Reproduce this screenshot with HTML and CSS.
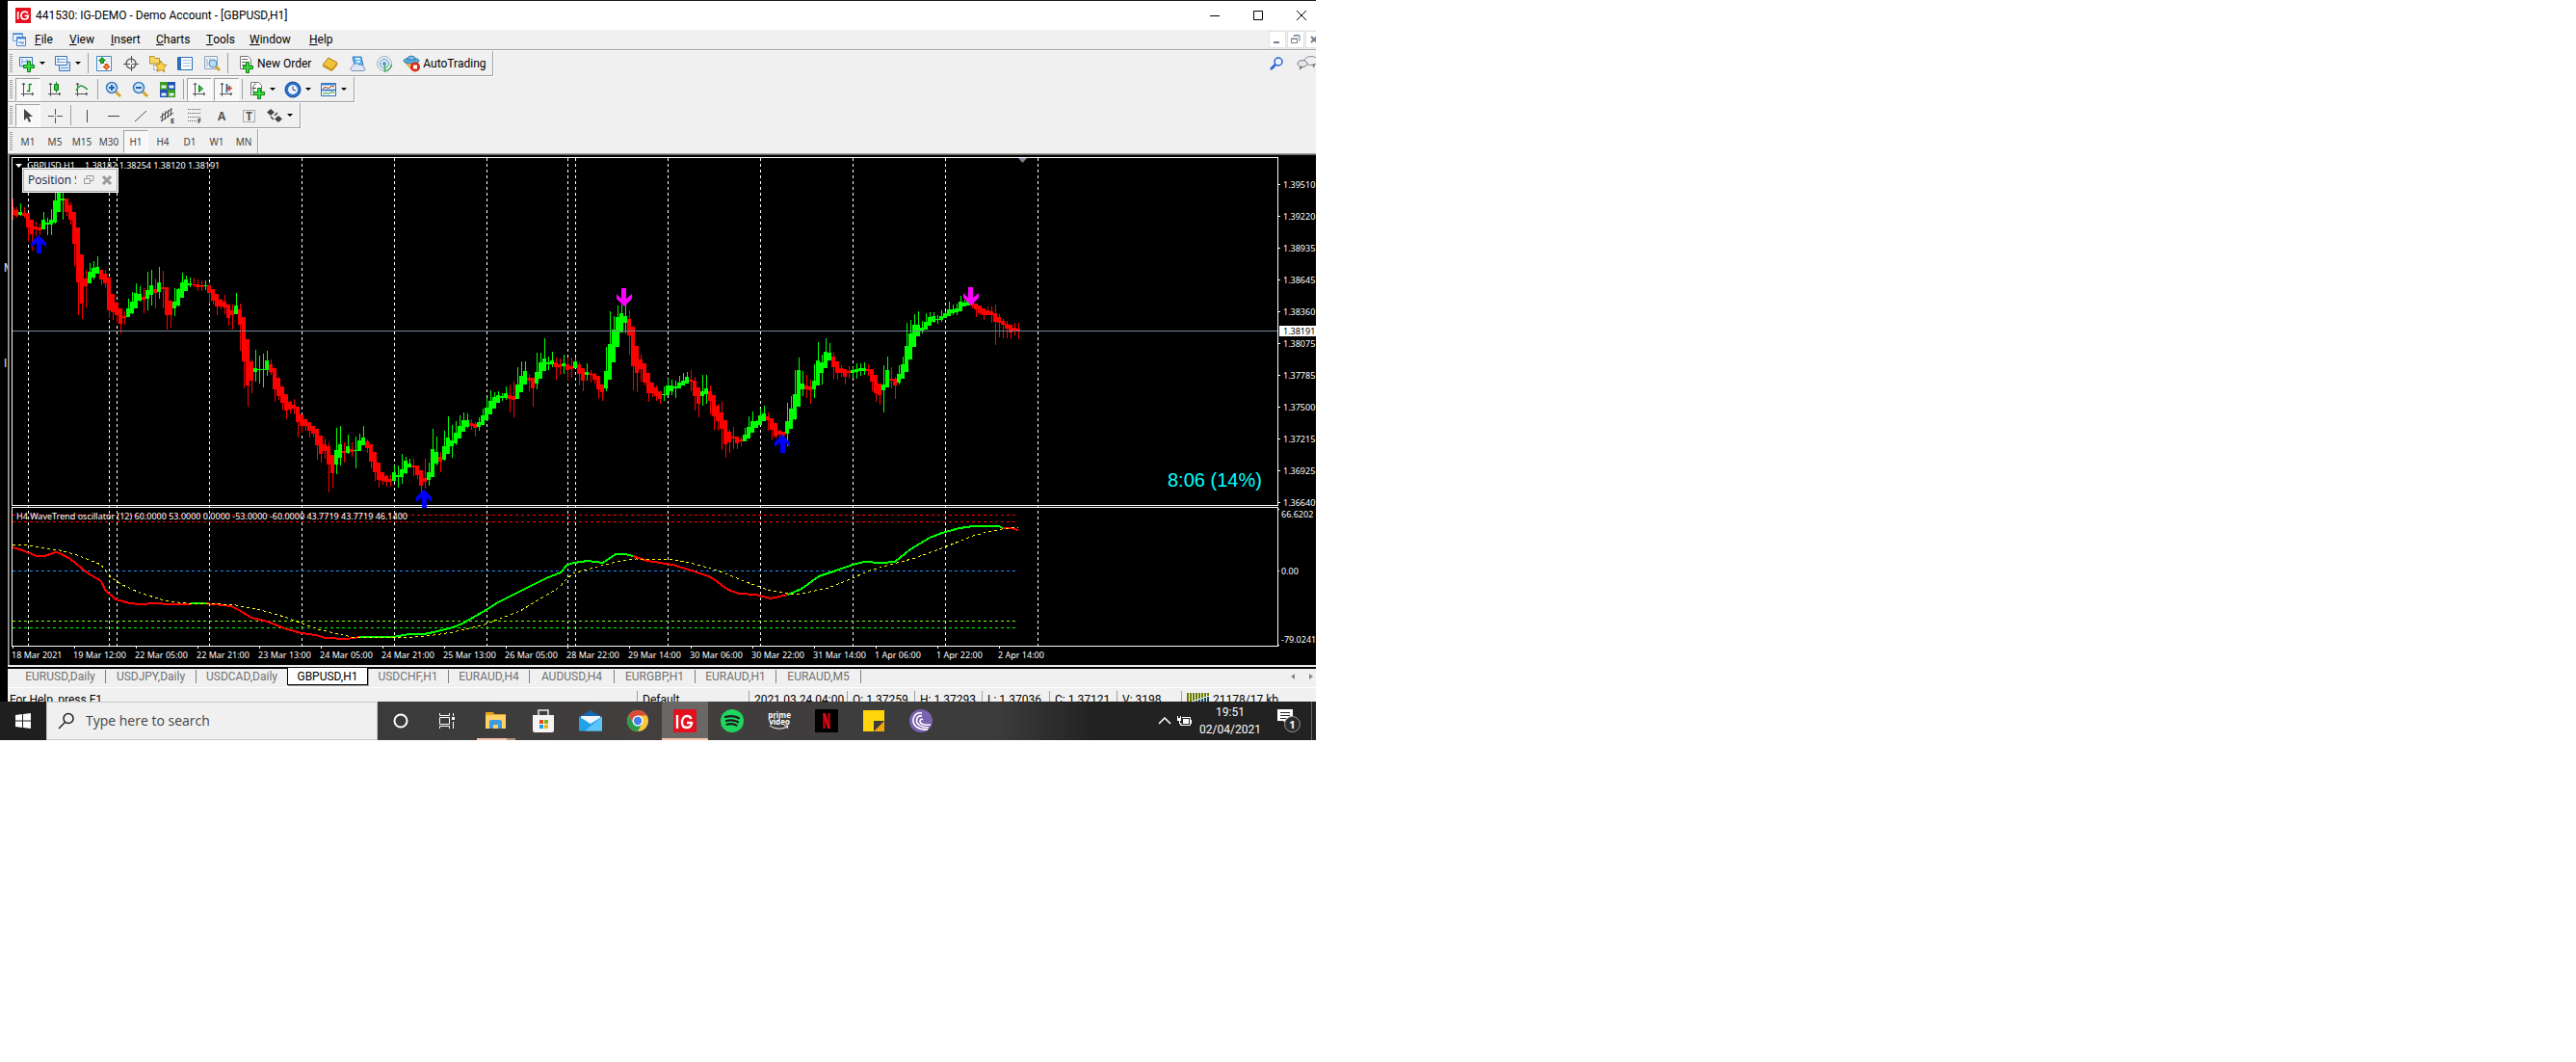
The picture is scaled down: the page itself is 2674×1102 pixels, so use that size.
FILE: index.html
```html
<!DOCTYPE html>
<html lang="en">
<head>
<meta charset="utf-8">
<title>441530: IG-DEMO - Demo Account - [GBPUSD,H1]</title>
<link rel="stylesheet" href="styles.css">
</head>
<body>
<div class="screen">
  <div class="workspace">
    <div class="backdrop"><span class="peek peek-first">M</span><span class="peek">I</span></div>
    <main class="terminal">
      <header class="titlebar">
        <svg class="ig-logo" width="16" height="16" viewBox="0 0 24 24"><rect width="24" height="24" fill="#e5101d"/><path d="M4 6v12M19.500 8.500C18 6.500 16 6 14 6.300C9.500 7 9 11 9 12.500C9 16 11.500 18 14.500 18C18 18 20 15.500 20 12.500H14.500" fill="none" stroke="#fff" stroke-width="2.600"/></svg>
        <h1>441530: IG-DEMO - Demo Account - [GBPUSD,H1]</h1>
        <div class="caption-buttons">
          <button aria-label="Minimize"><svg width="12" height="12"><path d="M1 6.500h10" stroke="#000"/></svg></button>
          <button aria-label="Maximize"><svg width="12" height="12"><path d="M1.500 1.500h9v9h-9z" fill="none" stroke="#000"/></svg></button>
          <button aria-label="Close"><svg width="12" height="12"><path d="M1 1l10 10M11 1L1 11" stroke="#000"/></svg></button>
        </div>
      </header>
      <nav class="menubar">
        <svg width="16" height="16" viewBox="0 0 16 16"><path d="M1.500 1.500h10v8h-10z" fill="#e4f0fc" stroke="#6ea0dc"/><path d="M1 2.500h11" stroke="#4a86d0"/><path d="M5.500 5.500h9v9h-9z" fill="#f4f9ff" stroke="#4a86d0"/><path d="M5 6.500h10" stroke="#4a86d0" stroke-width="2"/><path d="M7 10l1.500 2 1.500-2 1.500 3 1-3" fill="none" stroke="#4a86d0"/></svg>
        <button class="m-file"><u>F</u>ile</button>
        <button class="m-view"><u>V</u>iew</button>
        <button class="m-insert"><u>I</u>nsert</button>
        <button class="m-charts"><u>C</u>harts</button>
        <button class="m-tools"><u>T</u>ools</button>
        <button class="m-window"><u>W</u>indow</button>
        <button class="m-help"><u>H</u>elp</button>
        <div class="mdi-buttons">
          <button aria-label="Minimize chart"><svg width="16" height="16"><path d="M4 11h6" stroke="#71808f" stroke-width="2"/></svg></button>
          <button aria-label="Restore chart"><svg width="16" height="16"><path d="M6 5V4h6v5h-1M6 3.500h6" fill="none" stroke="#71808f"/><path d="M3.500 7.500h6v4h-6zM3 7h7" fill="none" stroke="#71808f"/></svg></button>
          <button aria-label="Close chart"><svg width="16" height="16"><path d="M5 5l6 6M11 5l-6 6" stroke="#71808f" stroke-width="2"/></svg></button>
        </div>
      </nav>

      <section class="toolbars">
        <div class="row">
          <div class="toolbar">
            <i class="grip"></i>
            <button class="tb drop" aria-label="New chart"><svg width="20" height="20"><path d="M2.500 3.500h13v9h-13z" fill="#eaf3fc" stroke="#3c74b8"/><path d="M5 5v6M5 8h8M10 5v5" stroke="#7aa6d8"/><path d="M10.500 7.500h3v4h4v3h-4v4h-3v-4h-4v-3h4z" fill="#35e038" stroke="#0a7d18"/></svg></button>
            <button class="tb drop" aria-label="Profiles"><svg width="20" height="20"><path d="M6.500 8.500h11v9h-11z" fill="#d8e9fa" stroke="#3c74b8"/><path d="M2.500 2.500h12v9h-12z" fill="#f2f8fe" stroke="#3c74b8"/><path d="M4 5.500h9M4 8.500h9M5.500 4v4M8 14.500h8" stroke="#6c9cd4"/></svg></button>
            <i class="sep"></i>
            <button class="tb" aria-label="Market Watch"><svg width="20" height="20"><path d="M2.500 2.500h15v15h-15z" fill="#fff" stroke="#3f86c8"/><path d="M12 5h4M12 8h4M4 11h4M4 14h4" stroke="#b6cfe6"/><path d="M8 3.500l3.500 3.500H9.500v2.500h-3V7H4.500z" fill="#24b030" stroke="#0a7d18"/><path d="M12.500 16.500l-3.500-3.500h2v-2.500h3V13h2z" fill="#ff7a3c" stroke="#c8400c"/></svg></button>
            <button class="tb" aria-label="Crosshair"><svg width="20" height="20"><circle cx="10" cy="10" r="5" fill="none" stroke="#666" stroke-width="1.500"/><path d="M10.500 2v7M10.500 11v7M2 10.500h7M11 10.500h7" stroke="#555"/></svg></button>
            <button class="tb" aria-label="Navigator"><svg width="20" height="20"><path d="M1.500 3V10h10V4.500H7L6 2.500H1.500z" fill="#f7d868" stroke="#b98d1c"/><path d="M5.500 11v6M6 16.500h4" stroke="#777" stroke-dasharray="1 1"/><path d="M13 7l1.800 3.800 4.200.6-3 3 .7 4.100-3.700-2-3.700 2 .7-4.100-3-3 4.200-.6z" fill="#fbd34b" stroke="#b98d1c"/></svg></button>
            <button class="tb" aria-label="Terminal"><svg width="20" height="20"><path d="M2.500 3.500h15v13h-15z" fill="#fafcff" stroke="#2d6fb8"/><path d="M4.500 3v14" stroke="#2d6fb8" stroke-width="3"/><path d="M8 6.500h8M8 9.500h8M8 12.500h8" stroke="#a9c4de"/></svg></button>
            <button class="tb" aria-label="Strategy Tester"><svg width="20" height="20"><path d="M2.500 2.500h13v13h-13z" fill="#eef3f8" stroke="#8ba3bb"/><path d="M5 5v8M8 4v8M12 5v8" stroke="#9aa8b6"/><circle cx="11" cy="10" r="4" fill="#b9dcf6" stroke="#4c86ba"/><path d="M14 13l4 4" stroke="#d8a02a" stroke-width="3"/></svg></button>
            <i class="sep"></i>
            <button class="tb labelled new-order"><svg width="20" height="20"><path d="M4.500 2.500h8l3 3v10h-11z" fill="#fff" stroke="#777"/><path d="M6 5.500h6M6 8.500h7M6 11.500h5" stroke="#666"/><path d="M10.500 8.500h3v4h4v3h-4v4h-3v-4h-3v-3h3z" fill="#35e038" stroke="#0a7d18"/></svg>New Order</button>
            <button class="tb" aria-label="MetaEditor"><svg width="20" height="20"><path d="M2 11l6-7 9 5-5 8z" fill="#f2c23c" stroke="#a97912"/><path d="M2 11l9 5 6-7v3l-6 6-9-5z" fill="#c98f14"/></svg></button>
            <button class="tb" aria-label="MetaTrader Market"><svg width="20" height="20"><path d="M5 3h9l2 9H7z" fill="#5bb2ee" stroke="#2c7fc0"/><path d="M8 5h5M9 8h4" stroke="#fff" stroke-width="1.500"/><path d="M4 17.500a3 3 0 0 1 1-5 4 4 0 0 1 7-1 3 3 0 0 1 4 2 2 2 0 0 1 0 4z" fill="#dde6f4" stroke="#7f97b8"/></svg></button>
            <button class="tb" aria-label="Signals"><svg width="20" height="20"><circle cx="10" cy="10" r="7.500" fill="#e6eef2" stroke="#9cb6c0"/><circle cx="10" cy="10" r="4.500" fill="none" stroke="#5c93b8"/><circle cx="10" cy="10" r="2" fill="#4f9ad0"/><path d="M10.500 11v7q6-1 7-7" fill="none" stroke="#48ac5c" stroke-width="1.500"/></svg></button>
            <button class="tb labelled"><svg width="20" height="20"><path d="M3 8l8 9 6-8z" fill="#f4c84a" stroke="#b98a1c"/><ellipse cx="10" cy="7" rx="8" ry="3" fill="#58aee0" stroke="#2e78ac"/><path d="M6 6a4 4 0 0 1 8 0z" fill="#7cc4ee" stroke="#2e78ac"/><circle cx="14" cy="13.500" r="5" fill="#dc2a14"/><path d="M12 11.500h4v4h-4z" fill="#fff"/></svg>AutoTrading</button>
          </div>
          <div class="toolbar-end">
            <button aria-label="Search"><svg width="16" height="16"><circle cx="10" cy="6" r="4" fill="#eaf2ff" stroke="#2a60d0" stroke-width="1.500"/><path d="M7 9l-5 5" stroke="#2a60d0" stroke-width="2.500"/></svg></button>
            <button aria-label="Chat"><svg width="22" height="18"><ellipse cx="15" cy="6" rx="7" ry="4.500" fill="#f0f0f2" stroke="#8a8a8e"/><path d="M16 10l2 4 1-5z" fill="#777"/><ellipse cx="6" cy="9" rx="5" ry="3.500" fill="#e4e4ea" stroke="#77777c"/><path d="M3 12v4l4-4z" fill="#777"/></svg></button>
          </div>
        </div>

        <div class="toolbar">
          <i class="grip"></i>
          <button class="tb pressed" aria-label="Bar chart"><svg width="20" height="20"><path d="M5.500 3v14M3 14.500h13M4 5l1.500-2L7 5M14 13l2 1.500-2 1.500" fill="none" stroke="#555"/><path d="M9 11.500h2.500v-7H14" fill="none" stroke="#14901c" stroke-width="1.500"/></svg></button>
          <button class="tb" aria-label="Candlesticks"><svg width="20" height="20"><path d="M5.500 3v14M3 14.500h13M4 5l1.500-2L7 5M14 13l2 1.500-2 1.500" fill="none" stroke="#555"/><path d="M11.500 2v11" stroke="#0a7d18"/><path d="M9.500 4.500h4v6h-4z" fill="#2fc838" stroke="#0a7d18"/></svg></button>
          <button class="tb" aria-label="Line chart"><svg width="20" height="20"><path d="M5.500 3v14M3 14.500h13M4 5l1.500-2L7 5M14 13l2 1.500-2 1.500" fill="none" stroke="#555"/><path d="M4 11c4-7 6-6 12-1" fill="none" stroke="#28a03c" stroke-width="1.500"/></svg></button>
          <i class="sep"></i>
          <button class="tb" aria-label="Zoom in"><svg width="20" height="20"><path d="M12 12l5 5" stroke="#d8a52a" stroke-width="3"/><circle cx="8" cy="8" r="5.500" fill="#cfe6fa" stroke="#3a7cc0" stroke-width="1.500"/><path d="M8 5v6M5 8h6" stroke="#2264b0" stroke-width="2"/></svg></button>
          <button class="tb" aria-label="Zoom out"><svg width="20" height="20"><path d="M12 12l5 5" stroke="#d8a52a" stroke-width="3"/><circle cx="8" cy="8" r="5.500" fill="#cfe6fa" stroke="#3a7cc0" stroke-width="1.500"/><path d="M5 8h6" stroke="#2264b0" stroke-width="2"/></svg></button>
          <button class="tb" aria-label="Tile windows"><svg width="20" height="20"><path d="M2 2h8v8H2zM10 10h8v8h-8z" fill="#3a9c20"/><path d="M10 2h8v8h-8zM2 10h8v8H2z" fill="#2450b8"/><path d="M3.500 5.500h5v3h-5zM11.500 5.500h5v3h-5zM3.500 13.500h5v3h-5zM11.500 13.500h5v3h-5z" fill="#e6f2e6"/></svg></button>
          <i class="sep"></i>
          <button class="tb pressed" aria-label="Auto scroll"><svg width="20" height="20"><path d="M5.500 3v14M3 14.500h13M4 5l1.500-2L7 5M14 13l2 1.500-2 1.500" fill="none" stroke="#555"/><path d="M9.500 5.500l4 3.500-4 3.500z" fill="#2fc838" stroke="#0a7d18"/></svg></button>
          <button class="tb pressed" aria-label="Chart shift"><svg width="20" height="20"><path d="M5.500 3v14M3 14.500h13M4 5l1.500-2L7 5M14 13l2 1.500-2 1.500" fill="none" stroke="#555"/><path d="M10.500 4v9" stroke="#2a70b0" stroke-width="2"/><path d="M16 8.500h-4M14 6l-2.500 2.500L14 11" fill="none" stroke="#c8401c" stroke-width="1.500"/></svg></button>
          <i class="sep"></i>
          <button class="tb drop" aria-label="Indicators"><svg width="20" height="20"><path d="M3.500 2.500h8l3 3v10h-11z" fill="#fff" stroke="#777"/><path d="M9 4.500c-2-1-3 1-3 3v6M4.500 8.500H9" fill="none" stroke="#555"/><path d="M10.500 8.500h3v4h4v3h-4v4h-3v-4h-4v-3h4z" fill="#35e038" stroke="#0a7d18"/></svg></button>
          <button class="tb drop" aria-label="Periods"><svg width="20" height="20"><circle cx="10" cy="10" r="8" fill="#2a72cc" stroke="#164a96"/><circle cx="10" cy="10" r="5" fill="#eaf4fe"/><path d="M10 6.500V10l3 1" fill="none" stroke="#444"/></svg></button>
          <button class="tb drop" aria-label="Templates"><svg width="20" height="20"><path d="M2.500 3.500h15v13h-15z" fill="#fff" stroke="#2d6fb8"/><path d="M2 4.500h16M3 10.500h14" stroke="#3f82c8" stroke-width="2"/><path d="M4 8.500l3-1 3 1 3-2 3 .500" fill="none" stroke="#b03018"/><path d="M4 14.500l3-1 3 1 3-2 3 1" fill="none" stroke="#1e9030"/></svg></button>
        </div>

        <div class="toolbar">
          <i class="grip"></i>
          <button class="tb pressed" aria-label="Cursor"><svg width="20" height="20"><path d="M6 3v12l3-3 2 5 2-1-2-5h4z" fill="#444"/></svg></button>
          <button class="tb" aria-label="Crosshair"><svg width="20" height="20"><path d="M10.500 3v6M10.500 12v6M3 10.500h6M12 10.500h6M10 10.500h1" stroke="#555"/></svg></button>
          <i class="sep"></i>
          <button class="tb" aria-label="Vertical line"><svg width="20" height="20"><path d="M10.500 4v13" stroke="#444"/></svg></button>
          <button class="tb" aria-label="Horizontal line"><svg width="20" height="20"><path d="M4 10.500h12" stroke="#444"/></svg></button>
          <button class="tb" aria-label="Trendline"><svg width="20" height="20"><path d="M4 16L16 5" stroke="#555"/></svg></button>
          <button class="tb" aria-label="Equidistant channel"><svg width="20" height="20"><path d="M2 12L14 3M3 16L16 7M5 7l-1 9M8 5L7 14M11 4l-1 8M14 2l-1 8" stroke="#444"/><text x="13" y="18" class="glyph-sm">E</text></svg></button>
          <button class="tb" aria-label="Fibonacci retracement"><svg width="20" height="20"><path d="M3 3.500h14M3 7.500h14M3 11.500h14M3 15.500h9" stroke="#555" stroke-dasharray="1 1"/><text x="13" y="18" class="glyph-sm">F</text></svg></button>
          <button class="tb" aria-label="Text"><svg width="20" height="20"><text x="6" y="15" class="glyph">A</text></svg></button>
          <button class="tb" aria-label="Text label"><svg width="20" height="20"><path d="M4.500 4.500h12v12h-12z" fill="none" stroke="#666" stroke-dasharray="1 1"/><text x="7" y="15" class="glyph">T</text></svg></button>
          <button class="tb drop" aria-label="Arrows"><svg width="20" height="20"><path d="M6 3l4 3.500-4 3.500-4-3.500zM14 10l4 3.500-4 3.500-4-3.500z" fill="#444"/><path d="M6 11l3 3M10 10l3-3" fill="none" stroke="#444" stroke-width="1.500"/></svg></button>
        </div>

        <div class="toolbar periods">
          <i class="grip"></i>
          <button class="tb">M1</button><button class="tb">M5</button><button class="tb">M15</button><button class="tb">M30</button><button class="tb pressed">H1</button><button class="tb">H4</button><button class="tb">D1</button><button class="tb">W1</button><button class="tb">MN</button>
        </div>
      </section>

      <section class="chart-frame">
        <svg class="chart" viewBox="10 161 1356 529">
          <g id="separators" class="separators"></g>
          <g shape-rendering="crispEdges">
            <g id="candles"></g>
            <path d="M13 343.500H1326" stroke="#778899"/>
            <path d="M12.500 163.500H1326.500V524.500H12.500zM12.500 526.500H1326.500V670.500H12.500z" fill="none" stroke="#fff"/>
            <g class="level"><path d="M13 534.500H1054M13 541.500H1054" stroke="#f00"/><path d="M13 592.500H1054" stroke="#1e90ff"/><path d="M13 644.500H1054" stroke="#7fff00"/><path d="M13 651.500H1054" stroke="#0f0"/></g>
            <path id="axis-ticks" stroke="#fff"/>
            <g class="wave">
              <polyline stroke="#f00" points="13,568 20,570 28,573 38,577 46,577 58,573 62,574 73,580 90,594 105,603 109,612 120,622 135,626 145,627 162,626 175,627 198,627"/>
              <polyline stroke="#0f0" points="198,626 214,626"/>
              <polyline stroke="#f00" points="214,626 240,629 248,633 261,641 278,645 295,652 313,657 328,659 338,662 360,663 373,661"/>
              <polyline stroke="#0f0" points="373,661 408,661 425,658 440,658 450,656 470,651 480,647 508,631 515,626 567,600 582,594 589,586 596,584 610,582 626,584 639,575 649,575 657,577"/>
              <polyline stroke="#f00" points="657,577 672,582 698,586 718,592 738,599 756,612 767,616 784,617 800,621 818,617"/>
              <polyline stroke="#0f0" points="818,617 832,611 850,598 865,593 885,586 897,583 915,584 929,583 945,570 965,558 978,553 996,548 1010,546 1037,546 1041,548"/>
              <polyline stroke="#f00" points="1041,548 1050,548 1057,550"/>
            </g>
            <polyline class="signal" points="13,565 29,566 62,571 80,576 105,586 113,597 125,606 145,615 170,623 193,626 218,626 245,628 270,633 295,640 330,653 365,661 400,662 430,661 450,659 470,656 500,649 540,634 581,609 588,601 595,595 620,588 640,583 660,580 700,581 720,585 745,592 780,606 800,613 818,616 832,616 860,610 885,600 900,593 920,587 950,579 980,568 1010,556 1025,552 1040,549 1057,547"/>
          </g>
          <defs><path id="arrow" d="M0 0L8 8v5L3 8v11h-5V8l-6 5V8z"/></defs>
          <g fill="#00f"><use href="#arrow" x="40" y="244"/><use href="#arrow" x="440" y="508"/><use href="#arrow" x="812" y="451"/></g>
          <g fill="#f0f"><use href="#arrow" transform="translate(648 318) rotate(180)"/><use href="#arrow" transform="translate(1008 317) rotate(180)"/></g>
          <path d="M1057 164h9l-4.500 5z" fill="#778899"/>
          <path d="M16 170h7l-3.500 4z" fill="#fff"/>
          <path d="M1328 338h38v11h-38z" fill="#fff"/>
          <g id="labels">
            <text x="28" y="175">GBPUSD,H1</text>
            <text x="88" y="175">1.38182 1.38254 1.38120 1.38191</text>
            <text x="17" y="539">H4 WaveTrend oscillator (12) 60.0000 53.0000 0.0000 -53.0000 -60.0000 43.7719 43.7719 46.1400</text>
            <text x="1332" y="347" class="current">1.38191</text>
            <text x="1330" y="537">66.6202</text>
            <text x="1330" y="596">0.00</text>
            <text x="1330" y="667">-79.0241</text>
          </g>
          <text x="1212" y="505" class="countdown">8:06 (14%)</text>
        </svg>
        <div class="floater">
          <span class="floater-title">Position S</span>
          <button aria-label="Restore"><svg width="12" height="12"><path d="M4 4V1.500h7v5H8M1.500 4.500h6v5h-6z" fill="none" stroke="#999"/></svg></button>
          <button aria-label="Close"><svg width="12" height="12"><path d="M2 2l8 8M10 2l-8 8" stroke="#999" stroke-width="3"/></svg></button>
        </div>
      </section>

      <nav class="tabs">
        <button class="tab daily">EURUSD,Daily</button><button class="tab daily">USDJPY,Daily</button><button class="tab daily">USDCAD,Daily</button><button class="tab active">GBPUSD,H1</button><button class="tab">USDCHF,H1</button><button class="tab">EURAUD,H4</button><button class="tab wide">AUDUSD,H4</button><button class="tab">EURGBP,H1</button><button class="tab">EURAUD,H1</button><button class="tab wide">EURAUD,M5</button>
        <div class="tab-scroll">
          <button aria-label="Scroll left"><svg width="6" height="8"><path d="M5 1v6L1 4z" fill="#888"/></svg></button>
          <button aria-label="Scroll right"><svg width="6" height="8"><path d="M1 1v6l4-3z" fill="#888"/></svg></button>
        </div>
      </nav>
      <footer class="status">
        <span class="s-help">For Help, press F1</span><span class="s-profile">Default</span><span class="s-time">2021.03.24 04:00</span><span class="s-price">O: 1.37259</span><span class="s-price">H: 1.37293</span><span class="s-price">L: 1.37036</span><span class="s-price">C: 1.37121</span><span class="s-volume">V: 3198</span>
        <span class="s-net"><svg width="24" height="12"><path d="M1 1v10M4 1v9M7 1v8M10 1v7M13 1v6M16 1v5M19 1v4M22 1v3" stroke="#6b7d00" stroke-width="2"/><path d="M7 10v2M10 9v3M13 8v4M16 7v5M19 6v6M22 5v7" stroke="#0f4a66" stroke-width="2"/></svg>21178/17 kb</span>
      </footer>
    </main>
  </div>

  <div class="taskbar">
    <button class="start" aria-label="Start"><svg width="16" height="16"><path d="M0 2l7-1v6.500H0zM8 1l8-1v7.500H8zM0 8.500h7V15l-7-1zM8 8.500h8V16l-8-1z" fill="#fff"/></svg></button>
    <label class="search"><svg width="18" height="18"><circle cx="11" cy="6.500" r="5" fill="none" stroke="#222" stroke-width="1.500"/><path d="M7.500 10.500L1 17" stroke="#222" stroke-width="1.500"/></svg><input type="text" placeholder="Type here to search" aria-label="Type here to search"></label>
    <button class="app" aria-label="Cortana"><svg width="24" height="24"><circle cx="12" cy="12" r="6.500" fill="none" stroke="#fff" stroke-width="2"/></svg></button>
    <button class="app" aria-label="Task view"><svg width="24" height="24"><path d="M4.500 4v2.500h10V4M4.500 20v-2.500h10V20M4.500 8.500h10v7h-10zM18.500 4v3M18.500 13v7" fill="none" stroke="#fff"/><path d="M17 8h3v3h-3z" fill="#fff"/></svg></button>
    <div class="pinned">
      <button class="app running" aria-label="File Explorer"><svg width="24" height="24"><path d="M1 3h8l1 2h12v15H1z" fill="#e8a51c"/><path d="M1 6h21v14H1z" fill="#fdd166"/><path d="M5 20v-8l2-1h9l2 1v8h-4v-4H9v4z" fill="#3f9be0"/></svg></button>
      <button class="app" aria-label="Microsoft Store"><svg width="24" height="24"><path d="M7 6V1h10v5" fill="none" stroke="#eee" stroke-width="1.500"/><path d="M1 6h22v16q0 2-2 2H3q-2 0-2-2z" fill="#f4f4f4"/><path d="M8 11h4v4H8z" fill="#e84a22"/><path d="M13 11h4v4h-4z" fill="#7cb510"/><path d="M8 16h4v4H8z" fill="#1c9fe6"/><path d="M13 16h4v4h-4z" fill="#f7b50c"/></svg></button>
      <button class="app" aria-label="Mail"><svg width="24" height="24"><path d="M0 8l12-7 12 7v14H0z" fill="#1767b0"/><path d="M2 7h20v9H2z" fill="#eef4fa"/><path d="M0 7.500L12 15l12-7.500V22.500H0z" fill="#22a2e8"/><path d="M24 7.500L6 22.500h18z" fill="#5cc4f6"/></svg></button>
      <button class="app" aria-label="Chrome"><svg width="24" height="24"><circle cx="12" cy="12" r="11" fill="#f8c93c"/><path d="M2.500 6.500A11 11 0 0 1 21.500 6.500H12L7.500 14.500z" fill="#dc4a3c"/><path d="M2.500 6.500A11 11 0 0 0 12 23L16.500 14.500 7.500 14.500z" fill="#2a9c50"/><circle cx="12" cy="12" r="5.500" fill="#fff"/><circle cx="12" cy="12" r="4.200" fill="#3f82ee"/></svg></button>
      <button class="app current-app" aria-label="IG"><svg width="24" height="24"><rect width="24" height="24" fill="#e5101d"/><path d="M4 6v14M18.500 10C17.500 7.500 16 7 14.500 7C11 7 9 10 9 13.500C9 17 11 19 14 19C17.500 19 19 16.500 19 14H14" fill="none" stroke="#fff" stroke-width="2.400"/></svg></button>
      <button class="app" aria-label="Spotify"><svg width="24" height="24"><circle cx="12" cy="12" r="12" fill="#1ed760"/><path d="M5 8c5-1.500 10-1 14 1.300M6 12c4-1.200 8-.8 12 1.200M6.500 15.700c3.500-.9 7-.6 10 1" fill="none" stroke="#1c1c1c" stroke-width="2.200" stroke-linecap="round"/></svg></button>
      <button class="app prime" aria-label="Prime Video"><span>prime<br>video</span><svg width="22" height="6"><path d="M1 1c6 4 13 4 18 1M16 1h4l-1 3" fill="none" stroke="#fff"/></svg></button>
      <button class="app" aria-label="Netflix"><svg width="24" height="24"><rect width="24" height="24" fill="#000"/><path d="M9.500 20V4M14.500 4v16" stroke="#b1060f" stroke-width="2.600"/><path d="M8.200 4h2.600l5 16h-2.600z" fill="#e50914"/></svg></button>
      <button class="app" aria-label="Sticky Notes"><svg width="24" height="24"><path d="M1 1h22v22H1z" fill="#ffd60a"/><path d="M12 12h11v11H12z" fill="#f2a70a"/><path d="M12 23V12h11z" fill="#3c3c3c"/></svg></button>
      <button class="app" aria-label="BitTorrent"><svg width="24" height="24"><circle cx="12" cy="12" r="12" fill="#7a62ae"/><path d="M19 21C10 22 3 17 4 10C5 5 9 3 13 4M20 19C13 19 7 16 7.500 11C8 8 10 6.500 13 7M22 16C15 17 11 15 11 12.500C11 10.500 12.500 10 14 10.500" fill="none" stroke="#fff" stroke-width="1.600"/></svg></button>
    </div>
    <div class="tray">
      <button aria-label="Show hidden icons"><svg width="14" height="8"><path d="M1 7l6-6 6 6" fill="none" stroke="#fff" stroke-width="1.500"/></svg></button>
      <button aria-label="Battery"><svg width="18" height="12"><path d="M6 2.500h8.500v8h-10V9" fill="none" stroke="#fff"/><path d="M7 4h6v5H7zM15 5h1v4h-1zM1 3h4v3H1z" fill="#fff"/><path d="M1.500 1v3M4.500 1v3M3.500 6v3H6" fill="none" stroke="#fff"/></svg></button>
      <div class="clock"><time>19:51</time><time>02/04/2021</time></div>
      <button class="notify" aria-label="Notifications"><svg width="16" height="16"><path d="M0 0h16v12H10v4l-4-4H0z" fill="#fff"/><path d="M3 3.500h10M3 6.500h10M3 9.500h6" stroke="#222"/></svg><span class="badge">1</span></button>
    </div>
  </div>
</div>
<script src="chart.js"></script>
</body>
</html>
```
FILE: styles.css
```css
* { box-sizing: border-box; }
body { margin: 0; background: #fff; color: #000; font: 12px/16px Roboto, "Open Sans", sans-serif; }
button { margin: 0; padding: 0; border: 0; background: none; color: inherit; font: inherit; display: flex; align-items: center; justify-content: center; white-space: nowrap; flex: none; }
svg { display: block; flex: none; }

.screen { max-width: 1366px; overflow: hidden; }
.workspace { display: flex; background: #000; }
.backdrop { width: 8px; flex: none; overflow: hidden; color: #cfe0ff; padding: 270px 0 0 4px; display: flex; flex-direction: column; gap: 83px; }
.terminal { flex: 1; min-width: 0; background: #f0f0f0; border-top: 1px solid #1a1a1a; }

.titlebar { display: flex; align-items: center; height: 30px; background: #fff; padding-left: 8px; }
.titlebar h1 { margin: 0 0 0 5px; font-size: 12px; font-weight: 400; flex: 1; }
.caption-buttons { display: flex; }
.caption-buttons button { width: 45px; height: 30px; }
.caption-buttons button:last-child { width: 46px; margin-right: -8px; }

.menubar { display: flex; align-items: center; height: 21px; padding-left: 4px; border-bottom: 1px solid #a0a0a0; }
.menubar > button { justify-content: flex-start; height: 18px; }
.m-file { width: 36px; margin-left: 8px; }
.m-view { width: 43px; }
.m-insert { width: 47px; }
.m-charts { width: 52px; }
.m-tools { width: 45px; }
.m-window { width: 62px; }
.mdi-buttons { display: flex; gap: 1px; margin: 0 -7px 0 auto; }
.mdi-buttons button { width: 18px; height: 18px; background: #fff; border: 1px solid #e2e2e2; }

.toolbars { display: flex; flex-direction: column; gap: 1px; align-items: flex-start; border-top: 1px solid #fff; }
.row { display: flex; justify-content: space-between; width: 100%; }
.toolbar { display: flex; align-items: center; height: 26px; padding: 0 2px; border-right: 1px solid #a0a0a0; border-bottom: 1px solid #a0a0a0; box-shadow: 1px 1px #fff; }
.grip { width: 3px; height: 20px; margin-right: 2px; background: repeating-linear-gradient(#a0a0a0 0 1px, #f0f0f0 1px 2px); }
.sep { width: 1px; height: 21px; margin: 0 2px; background: #a0a0a0; }
.tb { width: 28px; height: 24px; }
.tb.drop { width: 37px; gap: 3px; padding-left: 3px; justify-content: flex-start; }
.tb.drop::after { content: ""; border: 3px solid transparent; border-top-color: #000; border-bottom: 0; }
.tb.labelled { width: auto; gap: 2px; padding: 0 4px; }
.tb.labelled.new-order { padding: 0 6px; }
.tb.pressed { width: 26px; margin: 0 1px; border: 1px solid #a0a0a0; border-right-color: #fff; border-bottom-color: #fff; background: #f8f8f8; }
.glyph { font: 700 12px "Open Sans", sans-serif; fill: #555; }
.glyph-sm { font: 700 7px "Open Sans", sans-serif; fill: #333; }
.periods { height: 25px; padding-right: 0; border-bottom: 0; color: #444; font: 10px/16px "Noto Sans", sans-serif; }
.toolbar-end { display: flex; align-items: center; gap: 13px; margin-right: -2px; }

.chart-frame { position: relative; border: 1px solid #a0a0a0; border-width: 1px 0 0 1px; background: #000; box-shadow: inset 1px 1px #696969; padding: 1px 0 0 1px; }
.chart { width: 100%; height: auto; }
.separators { stroke: #fff; stroke-dasharray: 3 3; shape-rendering: crispEdges; }
.level { stroke-dasharray: 3 3; }
.wave { fill: none; stroke-width: 2; }
.signal { fill: none; stroke: #ff0; stroke-dasharray: 3 3; }
#labels { font: 9px "Noto Sans", sans-serif; fill: #fff; }
#labels .current { fill: #000; }
.countdown { font: 20px "Liberation Sans", Arial, sans-serif; fill: #0ff; }
.floater { position: absolute; left: 14px; top: 14px; width: 100px; height: 26px; display: flex; align-items: center; gap: 7px; padding: 0 5px; background: #f0f0f0; border: 1px solid #fff; box-shadow: inset 0 0 0 1px #a8a8a8; color: #1a1a3c; font-family: "Open Sans", sans-serif; }
.floater-title { width: 54px; overflow: hidden; white-space: nowrap; }

.tabs { display: flex; height: 24px; padding: 0 6px 2px 8px; border-top: 1px solid #e3e3e3; box-shadow: inset 0 1px #fff, inset 0 3px #000, inset 0 -1px #fff; }
.tab { width: 84px; height: 14px; margin-top: 4px; color: #707070; border-right: 1px solid #808080; }
.tab.daily { width: 94px; }
.tab.wide { width: 88px; }
.tab.active { height: 18px; margin-top: 2px; padding-top: 1px; background: #fff; color: #000; border: 1px solid #000; border-top: 0; box-shadow: 1px 1px #a0a0a0; }
.tab:nth-child(3) { border-right: 0; }
.tab-scroll { display: flex; align-items: center; gap: 13px; margin: 0 -4px 0 auto; }

.status { display: flex; height: 14px; overflow: hidden; padding: 3px 0 0 2px; }
.status span { flex: none; padding: 1px 0 0 5px; border-left: 1px solid #a0a0a0; height: 20px; white-space: nowrap; }
.status .s-help { flex: 1; min-width: 0; padding-left: 0; border: 0; }
.s-profile { width: 116px; }
.s-time { width: 102px; }
.s-price { width: 70px; }
.s-volume { width: 67px; }
.status .s-net { display: flex; align-items: flex-start; gap: 3px; width: 140px; }

.taskbar { display: flex; height: 40px; color: #fff; background: linear-gradient(90deg, #3b3b3b 30%, #423f3e 50%, #3b3b3b 76%, #222 83%, #222); }
.start { width: 48px; background: #1f1f1f; }
.search { display: flex; align-items: center; gap: 11px; width: 344px; flex: 0 1 344px; padding: 0 11px; background: #f0f0f0; border: 1px solid #c8c8c8; }
.search input { flex: 1; min-width: 0; border: 0; padding: 0; background: none; font: 14px/20px "Open Sans", sans-serif; }
.search input::placeholder { color: #444; opacity: 1; }
.app { width: 48px; height: 40px; }
.pinned { display: flex; gap: 1px; margin-left: 3px; }
.running { background: linear-gradient(90deg, #f9c4a8 31px, #b09080 31px) 4px 38px / 40px 2px no-repeat; }
.current-app { background: #6a6867; box-shadow: inset 0 -2px #f9c4a8; }
.prime { flex-direction: column; font: 700 8px/7px "Open Sans", sans-serif; }
.tray { display: flex; align-items: center; gap: 5px; margin-left: auto; padding-right: 4px; }
.tray::after { content: ""; width: 1px; height: 40px; margin-left: 6px; background: #666; }
.clock { display: flex; flex-direction: column; align-items: center; width: 66px; margin-right: 11px; font-size: 12px; line-height: 18px; }
.notify { position: relative; width: 24px; height: 24px; align-items: flex-start; justify-content: flex-start; }
.badge { position: absolute; left: 7px; top: 7px; width: 17px; height: 17px; border: 1px solid #999; border-radius: 50%; background: #2b2b2b; font: 700 11px/15px "Open Sans", sans-serif; text-align: center; }
```
FILE: chart.js
```js
// Hourly candles: colour, high, body top, body bottom, low.
// Levels count down from the top of the price scale, three to a pixel.
const candles = `
R 153 180 205 218|R 180 190 208 212|G 168 196 204 208|R 180 197 208 212|R 198 198 243 288|R 218 218 263 315|R 225 240 248 270|R 230 243 252 268
G 195 218 248 250|G 212 228 235 266|G 185 220 235 266|G 135 158 228 230|G 110 130 195 195|G 120 152 158 218|R 153 153 195 208|R 165 175 218 235
R 195 195 293 362|R 243 243 413 516|R 327 327 480 527|R 375 403 427 492|G 355 380 416 418|G 348 370 400 405|G 333 366 387 388|R 375 375 405 422
R 375 387 418 430|R 398 398 500 524|R 450 450 508 530|R 475 477 516 540|R 495 495 543 572|R 503 520 525 545|G 465 495 522 522|G 444 473 510 512
G 417 447 494 495|G 425 450 472 473|R 432 458 467 510|G 381 438 465 500|G 375 423 453 487|R 402 435 448 494|G 366 413 444 465|R 378 429 434 494
R 429 429 515 560|R 470 472 517 555|G 432 473 495 518|G 432 435 487 488|G 384 413 462 463|G 393 405 440 441|G 399 417 423 430|R 399 419 424 430
R 405 420 429 440|R 408 422 428 440|G 408 422 426 438|R 417 423 447 480|R 435 435 470 483|R 450 450 489 515|R 465 468 489 499|R 453 474 492 513
R 483 483 524 549|R 483 500 516 561|G 447 486 513 514|R 480 498 545 627|R 521 521 660 744|R 591 591 735 801|R 654 660 720 759|G 624 681 693 723
G 642 684 687 729|G 636 684 687 741|G 627 657 687 705|R 654 668 693 702|R 681 681 747 786|R 711 711 768 780|R 738 738 789 810|R 762 762 813 840
R 783 786 810 822|R 777 795 807 825|R 801 801 849 897|R 825 825 861 882|R 837 840 861 876|R 849 849 876 897|R 861 861 885 894|R 870 870 921 966
R 891 891 948 975|R 900 918 938 963|R 912 924 981 1068|R 951 951 1008 1053|G 867 936 981 1011|G 861 918 960 985|R 912 939 945 975|G 888 924 945 949
R 912 933 941 957|G 894 936 939 993|G 885 906 939 940|G 861 897 921 922|R 903 909 930 945|R 918 918 971 993|R 942 942 1005 1032|R 975 975 1029 1053
R 1004 1004 1032 1044|R 1014 1017 1035 1050|R 1014 1026 1035 1050|G 984 1005 1032 1035|G 984 1014 1020 1053|G 948 996 1020 1041|G 957 969 1008 1010|G 963 978 990 990
R 963 984 990 1017|R 984 984 1014 1026|R 999 999 1047 1071|R 963 1023 1035 1055|G 975 1005 1029 1047|G 870 933 1020 1021|G 894 942 978 983|R 942 957 972 1005
G 876 924 966 968|G 831 897 948 949|G 858 906 924 960|G 846 882 915 920|G 828 861 900 901|G 819 843 879 880|G 822 843 864 866|R 840 852 861 873
R 849 855 867 894|G 834 849 864 876|G 807 828 858 859|G 774 804 843 844|G 750 783 825 825|G 756 771 807 808|G 753 765 789 790|G 759 768 774 783
G 738 759 774 779|R 732 765 777 819|R 723 768 780 834|G 678 732 777 778|G 660 705 756 757|G 660 690 732 733|R 699 711 720 753|R 711 711 744 801
G 633 693 729 747|G 633 663 714 715|G 588 651 690 691|G 645 663 669 687|G 630 657 669 678|R 648 663 678 717|R 651 669 678 702|G 639 666 675 699
R 648 669 687 720|R 648 675 684 711|G 648 660 681 682|R 663 669 699 735|R 681 681 720 753|G 666 693 702 720|R 687 696 702 726|R 696 699 717 729
R 705 705 747 774|R 732 732 756 783|G 615 690 744 752|G 504 606 717 718|G 519 561 663 664|G 486 522 615 616|G 484 510 570 571|G 484 519 540 573
R 501 528 579 639|R 552 552 675 750|R 612 612 696 756|R 639 654 684 723|R 666 666 726 735|R 696 696 759 786|R 726 726 759 771|R 735 741 768 783
R 753 753 777 792|G 738 763 766 783|G 714 735 765 766|G 717 735 753 765|G 720 739 744 774|G 705 726 744 745|G 696 720 735 736|G 693 708 729 730
R 687 717 723 753|R 708 720 768 813|R 741 741 792 834|G 702 753 768 798|G 702 744 762 792|R 735 753 783 825|R 765 765 831 873|R 792 798 846 876
R 786 819 870 936|R 843 843 918 960|R 873 879 912 945|R 864 894 900 933|R 894 894 915 933|R 894 903 909 924|G 867 888 909 910|G 831 864 900 901
G 816 846 882 883|G 843 846 867 868|G 807 828 858 859|G 798 822 846 847|R 819 831 843 876|R 837 837 873 903|R 852 852 894 900|R 873 876 888 900
R 879 879 890 900|G 789 846 885 924|G 768 807 870 871|G 687 762 840 843|G 648 687 801 802|G 690 729 747 768|R 702 735 747 774|R 717 738 750 792
G 669 720 747 774|G 600 657 735 736|G 639 663 696 732|G 588 630 681 682|G 603 633 657 658|R 633 645 678 714|R 660 660 696 717|R 672 681 696 708
R 684 684 708 732|R 675 690 696 714|G 678 687 696 711|G 666 684 693 714|G 666 681 690 705|G 663 681 690 702|R 669 683 690 705|R 684 684 723 753
R 702 702 759 786|R 729 729 765 795|G 672 732 750 819|G 645 687 741 742|R 678 714 720 744|R 708 714 735 777|G 672 699 726 732|G 645 669 714 715
G 540 612 693 694|G 531 573 654 655|G 513 546 615 616|G 504 546 582 583|G 534 555 567 573|G 510 537 560 561|G 507 522 549 550|G 507 519 537 540
G 516 527 531 543|G 501 519 531 537|G 504 510 525 526|G 474 498 519 520|G 483 498 510 516|G 480 495 507 516|G 456 474 504 505|G 468 477 489 490
G 450 471 486 487|R 470 475 485 495|R 480 480 498 522|R 486 486 510 516|R 495 495 516 531|R 489 501 516 516|R 489 504 516 540|R 483 510 537 609
R 513 522 540 585|R 528 534 546 588|R 534 543 558 588|R 546 546 570 591|R 540 555 567 579|R 540 558 568 591
`.trim().split(/[|\n]/);

const SVG = 'http://www.w3.org/2000/svg';
const level = n => 155 + Math.round(n / 3);

function add(parent, name, attributes, text) {
  const node = document.createElementNS(SVG, name);
  for (const key in attributes) node.setAttribute(key, attributes[key]);
  if (text) node.textContent = text;
  document.getElementById(parent).append(node);
}

candles.forEach((row, i) => {
  const [colour, ...values] = row.split(' ');
  const [high, top, bottom, low] = values.map(level);
  const x = 13 + 4 * i;
  const left = Math.max(13, x - 2);
  const d = `M${x} ${high}h1V${low}h-1zM${left} ${top}H${x + 2}V${Math.max(bottom, top + 1)}H${left}z`;
  add('candles', 'path', { d, fill: colour === 'R' ? '#f00' : '#0f0' });
});

for (const x of [29, 113, 121, 217, 313, 409, 505, 589, 597, 693, 789, 885, 981, 1077]) {
  add('separators', 'path', { d: `M${x}.5 164V670` });
}

const prices = ['1.39510', '1.39220', '1.38935', '1.38645', '1.38360', '1.38075', '1.37785', '1.37500', '1.37215', '1.36925', '1.36640'];
const times = ['18 Mar 2021', '19 Mar 12:00', '22 Mar 05:00', '22 Mar 21:00', '23 Mar 13:00', '24 Mar 05:00', '24 Mar 21:00', '25 Mar 13:00', '26 Mar 05:00', '28 Mar 22:00', '29 Mar 14:00', '30 Mar 06:00', '30 Mar 22:00', '31 Mar 14:00', '1 Apr 06:00', '1 Apr 22:00', '2 Apr 14:00'];
let ticks = 'M1327 528.5h1M1327 592.5h1M1327 669.5h1';
prices.forEach((price, i) => {
  const y = 191 + 33 * i;
  ticks += `M1327 ${y}.5h2`;
  add('labels', 'text', { x: 1332, y: y + 4 }, price);
});
times.forEach((time, i) => {
  const x = 13 + 64 * i;
  ticks += `M${x}.5 671v2`;
  add('labels', 'text', { x: x - 1, y: 683 }, time);
});
document.getElementById('axis-ticks').setAttribute('d', ticks);
```
